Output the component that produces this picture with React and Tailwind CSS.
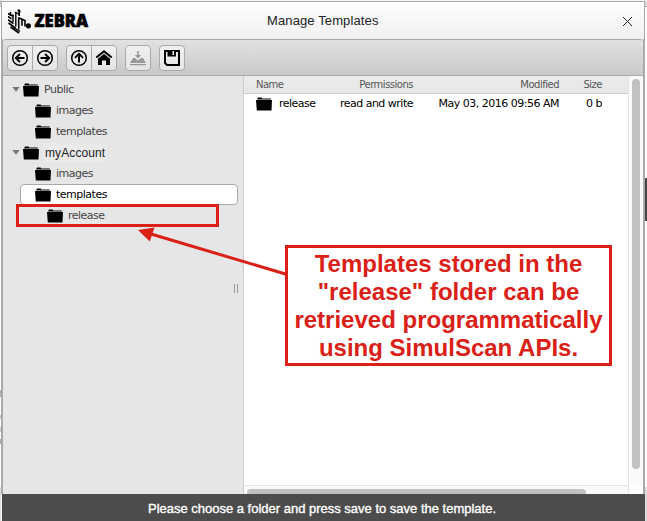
import React from "react";

const VERDANA = "font-['DejaVu_Sans',sans-serif]";
const ARIAL = "font-['Liberation_Sans',sans-serif]";

function Folder() {
  return (
    <svg width="16" height="14" viewBox="0 0 16 14" className="block shrink-0">
      <path d="M1.300 1.800L2 .6h3.500l.8.8h8.500v1H1.300z" fill="#000" />
      <path d="M0 3.100h16L15.500 13.500H.8z" fill="#000" />
    </svg>
  );
}

function Row({ indent, label, arrow, className = "" }) {
  return (
    <div className={`flex h-[21px] items-center ${indent} ${className}`}>
      {arrow && (
        <svg width="8" height="5" viewBox="0 0 8 5" className="mr-[3px] block shrink-0">
          <path d="M.3 0h7.4L4 4.700z" fill="#777" />
        </svg>
      )}
      <Folder />
      {label}
    </div>
  );
}

function CircleArrow({ turn = "" }) {
  return (
    <svg width="18" height="18" viewBox="0 0 18 18" className={turn} fill="none" stroke="#000">
      <circle cx="9" cy="9" r="7.300" strokeWidth="1.500" />
      <path d="M13.500 9H5.500M8.900 5L4.900 9l4 4" strokeWidth="2" />
    </svg>
  );
}

const cell = "flex w-[25px] items-center justify-center";
const group = "flex h-[26px] rounded-[4px] border border-[#aaa] bg-linear-to-b from-[#f0f0f0] to-[#e5e5e5]";

function Logo() {
  return (
    <svg width="24" height="26" viewBox="0 0 24 26" className="block" fill="none" stroke="#000">
      <path d="M0 4.500l5.500 2.700M0 7.500l3.500 2.200M0 10.700l5.500 4M.5 14l7 5M2.500 18l8.500 6" strokeWidth="1.600" />
      <path d="M2.500 3v4M5 5.500v7.500M7.800 4v13.500M7 3l4.500 2.500M6.500 19l5.500 3.500" strokeWidth="1.400" />
      <path d="M11.200.5v6.500M9.500 1.200l3 1.500M10.700 8.500v12M10.700 8.700l3.300 1.500v6.500M14 10.200l3 1.300v6" strokeWidth="1.600" />
      <circle cx="20.400" cy="16.800" r="2.600" fill="#000" stroke="none" />
    </svg>
  );
}

export default function App() {
  return (
    <div className={`relative flex h-[521px] w-[647px] overflow-hidden bg-[#f5f5f5] ${VERDANA}`}>
      <div className="flex w-[1px] shrink-0 flex-col bg-white">
        <div className="h-[7px] bg-[#ccc]" />
        <div className="mt-[383px] h-[7px] bg-[#aaa]" />
        <div className="mt-[18px] h-[4px] bg-[#b5c4dd]" />
        <div className="mt-[8px] h-[5px] bg-[#c3cbd9]" />
        <div className="mt-[7px] h-[5px] bg-[#aaa]" />
        <div className="mt-[43px] h-[34px] bg-[#ddd]" />
      </div>
      <div className="mt-px flex h-[520px] w-[644px] shrink-0 flex-col border-t border-[#aaa] bg-white">
        <header className="flex h-[37px] shrink-0 items-center border-x border-[#aaa] bg-linear-to-b from-white to-[#f0f0f0]">
          <div className="ml-[6px] mt-[2px]"><Logo /></div>
          <svg width="60" height="28" className="ml-[2px] block">
            <text x="0.500" y="20" textLength="53.500" lengthAdjust="spacingAndGlyphs" className="font-['Open_Sans',sans-serif] text-[18px] font-extrabold" fill="#000" stroke="#000" strokeWidth=".7">ZEBRA</text>
          </svg>
          <div className={`ml-[173px] w-[130px] whitespace-nowrap text-[13px] tracking-[0.12px] text-[#222] ${ARIAL}`}>Manage Templates</div>
          <svg width="11" height="11" viewBox="0 0 11 11" className="ml-auto mr-[11px] mt-[2px]" stroke="#222" strokeWidth="1">
            <path d="M1 1l9 9M10 1l-9 9" />
          </svg>
        </header>
        <div className="flex h-[455px] shrink-0 flex-col border-x-2 border-[#aaa]">
          <div className="flex h-[37px] shrink-0 items-center rounded-t-[3px] border-y border-[#aaa] bg-linear-to-b from-[#e2e2e2] to-[#c8c8c8] pl-[4px]">
            <div className={`${group} w-[51px]`}>
              <div className={cell}><CircleArrow /></div>
              <div className={`${cell} border-l border-[#aaa]`}><CircleArrow turn="rotate-180" /></div>
            </div>
            <div className={`${group} ml-[8px] w-[51px]`}>
              <div className={cell}><CircleArrow turn="rotate-90" /></div>
              <div className={`${cell} border-l border-[#aaa]`}>
                <svg width="18" height="17" viewBox="0 0 18 17">
                  <path d="M1.300 8.500L9 2.200l7.700 6.300" fill="none" stroke="#000" strokeWidth="2" />
                  <path d="M3 9.700l6-4.900 6 4.900V16h-4v-4.500H7V16H3z" fill="#000" />
                </svg>
              </div>
            </div>
            <div className={`${group} ml-[8px] w-[26px] items-center justify-center`}>
              <svg width="18" height="18" viewBox="0 0 18 18" fill="#999">
                <path d="M1 14l3-5h2l3 2.500L12 9h2l3 5zM1 15h16v1.300H1zM8.200 2h1.600v4h2.400L9 9.500 5.800 6h2.400z" />
              </svg>
            </div>
            <div className={`${group} ml-[8px] w-[26px] items-center justify-center`}>
              <svg width="18" height="18" viewBox="0 0 18 18">
                <path d="M2 2h14v14H4l-2-2z" fill="none" stroke="#000" strokeWidth="2" />
                <path d="M4.500 1h8.500v6.500H4.500z" fill="#000" /><path d="M9.500 2h1.500v4H9.500z" fill="#eee" />
              </svg>
            </div>
          </div>
          <div className="flex h-[418px]">
            <aside className="w-[241px] shrink-0 border-r border-[#ccc] bg-[#e6e6e6] pt-[3px] text-[11px] leading-[21px] tracking-[-0.5px] text-[#444]">
              <Row arrow indent="pl-[9px]" label={<span className="ml-[5px]">Public</span>} />
              <Row indent="pl-[32px]" label={<span className="ml-[5px]">images</span>} />
              <Row indent="pl-[32px]" label={<span className="ml-[5px]">templates</span>} />
              <Row arrow indent="pl-[9px]" label={<span className={`ml-[4px] h-[19px] bg-[#eaeaea] px-[2px] text-[12px] leading-[20px] tracking-[0.1px] text-[#222] ${ARIAL}`}>myAccount</span>} />
              <Row indent="pl-[32px]" label={<span className="ml-[5px]">images</span>} />
              <Row indent="pl-[14px]" className="ml-[17px] mr-[5px] rounded-[4px] border border-[#aaa] bg-white text-black" label={<span className="ml-[5px]">templates</span>} />
              <Row indent="pl-[28px]" className="-mt-px ml-[13px] h-[23px] w-[203px] border-[3px] border-[#da2017]" label={<span className="ml-[5px]">release</span>} />
              <div className="ml-[231px] mt-[57px] h-[9px] w-[4px] border-x border-[#999]" />
            </aside>
            <main className="flex h-[418px] w-[385px] shrink-0 flex-col border-r border-[#e5e5e5] bg-white">
              <div className="flex h-[18px] shrink-0 items-center border-b border-[#ccc] bg-linear-to-b from-[#ececec] to-[#e6e6e6] text-[10px] tracking-[-0.5px] text-[#555]">
                <span className="w-[70px] pl-[12px]">Name</span>
                <span className="w-[99px] text-right">Permissions</span>
                <span className="w-[146px] text-right">Modified</span>
                <span className="w-[43px] text-right">Size</span>
              </div>
              <div className="flex h-[20px] shrink-0 items-center whitespace-nowrap text-[11px] tracking-[-0.5px] text-black">
                <span className="flex w-[80px] items-center pl-[12px]"><Folder /><span className="ml-[7px]">release</span></span>
                <span className="w-[89px] text-right">read and write</span>
                <span className="w-[146px] text-right">May 03, 2016 09:56 AM</span>
                <span className="w-[43px] text-right">0 b</span>
              </div>
              <div className="mt-auto h-[9px] border-t border-[#e5e5e5] bg-[#fafafa] pl-[3px] pt-[3px]">
                <div className="h-[5px] w-[339px] rounded-t-[4px] bg-[#c1c1c1]" />
              </div>
            </main>
            <div className="flex h-[409px] w-[14px] justify-center bg-[#fafafa] pt-[3px]">
              <div className="h-[390px] w-[8px] rounded-[4px] bg-[#c1c1c1]" />
            </div>
          </div>
        </div>
        <footer className={`ml-px flex h-[27px] shrink-0 items-center bg-[#4c4c4c] pl-[146px] text-[13px] text-white ${ARIAL}`}>
          <svg width="355" height="20"><text x="0" y="14.500" textLength="348" fill="#fff" stroke="#fff" strokeWidth=".35">Please choose a folder and press save to save the template.</text></svg>
        </footer>
      </div>
      <div className="flex w-[2px] shrink-0 flex-col bg-white">
        <div className="h-[7px] border-b border-[#aaa] bg-[#ddd]" />
        <div className="mt-[171px] h-[43px] bg-[#444]" />
        <div className="mt-[266px] h-[34px] bg-[#ddd]" />
      </div>
      <svg width="647" height="521" className="pointer-events-none absolute inset-0">
        <path d="M287 274.500L151 234" stroke="#da2017" strokeWidth="3" />
        <path d="M138 230l16.500-2.500-4.700 14z" fill="#da2017" />
      </svg>
      <div className={`absolute left-[285px] top-[245px] h-[121px] w-[327px] border-[3px] border-[#da2017] bg-white pt-[2px] text-center text-[24px] font-bold leading-[28px] text-[#da2017] ${ARIAL}`}>
        <div className="whitespace-nowrap">Templates stored in the</div>
        <div className="whitespace-nowrap">"release" folder can be</div>
        <div className="whitespace-nowrap">retrieved programmatically</div>
        <div className="whitespace-nowrap">using SimulScan APIs.</div>
      </div>
    </div>
  );
}
